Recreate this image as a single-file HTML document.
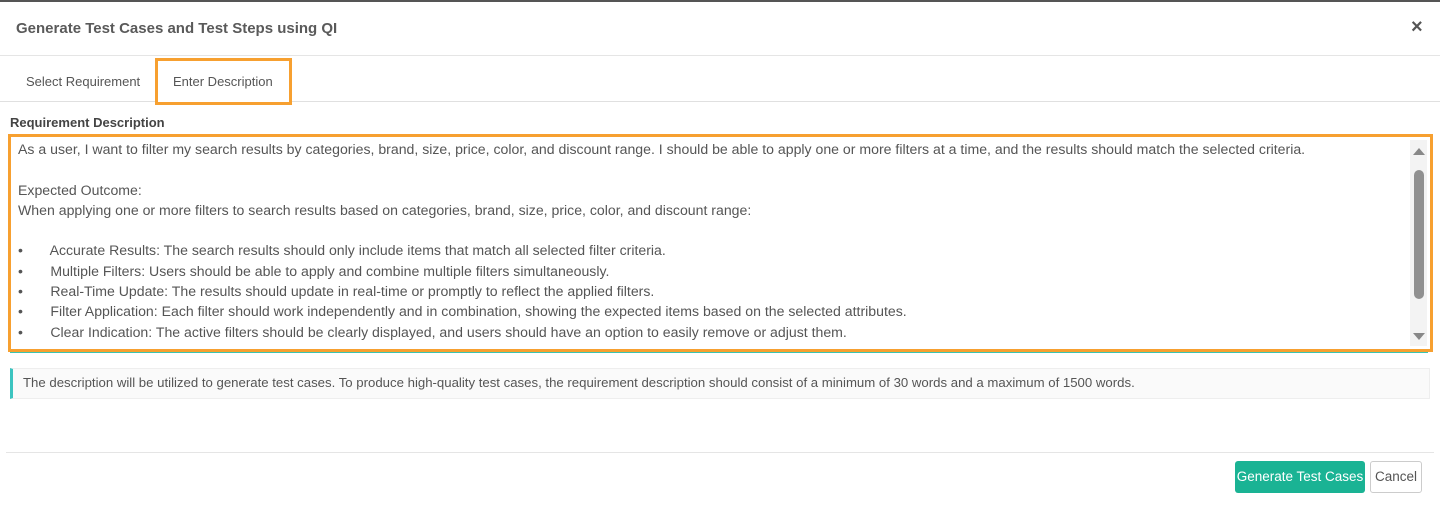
<!DOCTYPE html>
<html><head><style>
*{box-sizing:border-box;margin:0;padding:0}
body{width:1440px;height:526px;background:#fff;font-family:"Liberation Sans",sans-serif;color:#555;position:relative;overflow:hidden}
.abs{position:absolute}
</style></head><body>
<div class="abs" style="left:0;top:0;width:1440px;height:2px;background:#555"></div>
<div class="abs" style="left:16px;top:20px;font-size:15px;font-weight:bold;color:#5a5a5a">Generate Test Cases and Test Steps using QI</div>
<div class="abs" style="left:1411px;top:16px;font-size:20px;font-weight:bold;color:#555">&#xD7;</div>
<div class="abs" style="left:0;top:55px;width:1440px;height:1px;background:#e5e5e5"></div>
<div class="abs" style="left:26px;top:74px;font-size:13px;color:#555">Select Requirement</div>
<div class="abs" style="left:0;top:101px;width:1440px;height:1px;background:#e0e0e0"></div>
<div class="abs" style="left:155px;top:58px;width:137px;height:47px;border:3px solid #f7a030;background:#fff"></div>
<div class="abs" style="left:173px;top:74px;font-size:13px;color:#555">Enter Description</div>
<div class="abs" style="left:10px;top:115px;font-size:13px;font-weight:bold;color:#444">Requirement Description</div>
<div class="abs" style="left:10px;top:350px;width:1418px;height:3px;background:#3cc4b0"></div>
<div class="abs" style="left:8px;top:134px;width:1425px;height:218px;border:3px solid #f7a030;background:#fff"></div>
<div class="abs" style="left:18px;top:139px;width:1390px;font-size:14.1px;line-height:20.3px;color:#555;white-space:pre">As a user, I want to filter my search results by categories, brand, size, price, color, and discount range. I should be able to apply one or more filters at a time, and the results should match the selected criteria.

Expected Outcome:
When applying one or more filters to search results based on categories, brand, size, price, color, and discount range:

•       Accurate Results: The search results should only include items that match all selected filter criteria.
•       Multiple Filters: Users should be able to apply and combine multiple filters simultaneously.
•       Real-Time Update: The results should update in real-time or promptly to reflect the applied filters.
•       Filter Application: Each filter should work independently and in combination, showing the expected items based on the selected attributes.
•       Clear Indication: The active filters should be clearly displayed, and users should have an option to easily remove or adjust them.</div>
<div class="abs" style="left:1410px;top:140px;width:17px;height:206px;background:#f3f3f3"></div>
<div class="abs" style="left:1413px;top:148px;width:0;height:0;border-left:6px solid transparent;border-right:6px solid transparent;border-bottom:7px solid #888"></div>
<div class="abs" style="left:1414px;top:170px;width:10px;height:129px;background:#909090;border-radius:5px"></div>
<div class="abs" style="left:1413px;top:333px;width:0;height:0;border-left:6px solid transparent;border-right:6px solid transparent;border-top:7px solid #888"></div>
<div class="abs" style="left:10px;top:368px;width:1420px;height:31px;background:#fafafa;border:1px solid #eee;border-left:3px solid #3cc4c0"></div>
<div class="abs" style="left:23px;top:375px;font-size:13.2px;color:#555">The description will be utilized to generate test cases. To produce high-quality test cases, the requirement description should consist of a minimum of 30 words and a maximum of 1500 words.</div>
<div class="abs" style="left:6px;top:452px;width:1428px;height:1px;background:#e5e5e5"></div>
<div class="abs" style="left:1235px;top:461px;width:130px;height:32px;background:#1ab394;border-radius:3px;color:#fff;font-size:13.5px;line-height:32px;text-align:center">Generate Test Cases</div>
<div class="abs" style="left:1370px;top:461px;width:52px;height:32px;background:#fff;border:1px solid #ccc;border-radius:3px;color:#555;font-size:13.5px;line-height:30px;text-align:center">Cancel</div>
</body></html>
